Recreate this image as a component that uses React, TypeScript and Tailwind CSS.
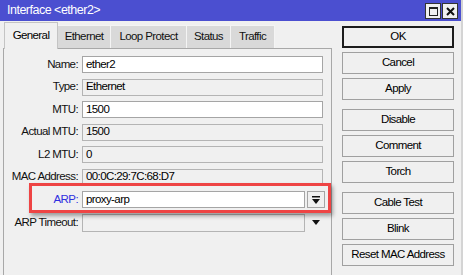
import React from 'react';

const font = { fontFamily: '"Liberation Sans", Arial, sans-serif' };

const tabs = ['General', 'Ethernet', 'Loop Protect', 'Status', 'Traffic'];
const tabWidths = ['w-[54px]', 'w-[53px]', 'w-[76px]', 'w-[44px]', 'w-[44px]'];

type Field = { label: string; value: string; editable?: boolean };

const fields: Field[] = [
  { label: 'Name:', value: 'ether2', editable: true },
  { label: 'Type:', value: 'Ethernet' },
  { label: 'MTU:', value: '1500', editable: true },
  { label: 'Actual MTU:', value: '1500' },
  { label: 'L2 MTU:', value: '0' },
  { label: 'MAC Address:', value: '00:0C:29:7C:68:D7' },
];

const buttonGroups = [
  ['OK', 'Cancel', 'Apply'],
  ['Disable', 'Comment', 'Torch'],
  ['Cable Test', 'Blink', 'Reset MAC Address'],
];

const Row = ({ label, value, editable }: Field) => (
  <div className="flex items-center h-[17px]">
    <div className="w-[74px] whitespace-nowrap text-right text-[11.5px] tracking-[-0.6px] text-[#111] leading-none">{label}</div>
    <div
      className={`ml-[4px] w-[241px] h-[17px] border flex items-center pl-[3px] text-[11.5px] tracking-[-0.6px] leading-none text-black ${
        editable ? 'bg-white border-[#a5a5a5]' : 'bg-[#f0f0f0] border-[#b4b4b4]'
      }`}
    >
      {value}
    </div>
  </div>
);

export default function App() {
  return (
    <div className="w-[463px] h-[275px] bg-[#f0f0f0] overflow-hidden flex flex-col border-r-2 border-r-[#d4d4d4]" style={font}>
      <div className="h-[21px] bg-[#4b4fd0] flex items-center justify-between pl-[7px] pr-[3px] shrink-0">
        <span className="text-white text-[12.5px] tracking-[-0.5px] leading-none">Interface &lt;ether2&gt;</span>
        <div className="flex gap-[1px] mt-[1px]">
          <div className="w-[16px] h-[16px] bg-[#f0f0f0] border border-[#333] flex items-center justify-center">
            <div className="w-[9px] h-[9px] border border-[#222] border-t-2" />
          </div>
          <div className="w-[16px] h-[16px] bg-[#f0f0f0] border border-[#333] flex items-center justify-center">
            <svg width="9" height="9" viewBox="0 0 9 9">
              <path d="M1 1L8 8M8 1L1 8" stroke="#111" strokeWidth="2" />
            </svg>
          </div>
        </div>
      </div>

      <div className="flex flex-1">
        <div className="ml-[3px] w-[329px] flex flex-col">
          <div className="flex items-end h-[27px] pl-[1px]">
            {tabs.map((t, i) =>
              i === 0 ? (
                <div
                  key={t}
                  className={`${tabWidths[i]} h-[27px] -mb-[1px] relative z-10 bg-[#f0f0f0] border border-b-0 border-[#c4c4c4] flex items-center justify-center text-[11.5px] tracking-[-0.6px] text-black`}
                >
                  {t}
                </div>
              ) : (
                <div
                  key={t}
                  className={`${tabWidths[i]} h-[23px] bg-[#d9d9d9] border border-b-0 border-l-0 border-[#f4f4f4] flex items-center justify-center text-[11.5px] tracking-[-0.6px] text-[#111]`}
                >
                  {t}
                </div>
              )
            )}
          </div>
          <div className="flex-1 border border-b-0 border-[#a8a8a8] pt-[7px] flex flex-col gap-[5.5px]">
            {fields.map((f) => (
              <Row key={f.label} {...f} />
            ))}
            <div className="flex items-center h-[17px] relative">
              <div className="w-[74px] text-right text-[11.5px] tracking-[-0.6px] text-[#2f2fe0] leading-none">ARP:</div>
              <div className="ml-[4px] w-[223px] h-[17px] bg-white border border-[#a5a5a5] flex items-center pl-[3px] text-[11.5px] tracking-[-0.6px] leading-none text-black">
                proxy-arp
              </div>
              <div className="ml-[2px] w-[18px] h-[17px] bg-[#f0f0f0] border border-[#a5a5a5] flex items-center justify-center">
                <svg width="8" height="8" viewBox="0 0 8 8">
                  <rect x="0" y="0" width="8" height="1.5" fill="#111" />
                  <path d="M0 3H8L4 8Z" fill="#111" />
                </svg>
              </div>
              <div className="absolute left-[25px] top-[-8px] w-[302px] h-[30px] border-[3px] border-[#ee4444] shadow-[2px_3px_4px_rgba(0,0,0,0.35)] pointer-events-none" />
            </div>
            <div className="flex items-center h-[18px]">
              <div className="w-[74px] whitespace-nowrap text-right text-[11.5px] tracking-[-0.6px] text-[#111] leading-none">ARP Timeout:</div>
              <div className="ml-[4px] w-[223px] h-[18px] bg-[#f0f0f0] border border-[#b4b4b4]" />
              <div className="ml-[2px] w-[18px] flex items-center justify-center">
                <svg width="8" height="5" viewBox="0 0 8 5">
                  <path d="M0 0H8L4 5Z" fill="#111" />
                </svg>
              </div>
            </div>
          </div>
        </div>

        <div className="ml-[10px] pt-[5px] w-[112px] flex flex-col gap-[9px]">
          {buttonGroups.map((g, gi) => (
            <div key={gi} className="flex flex-col gap-[4px]">
              {g.map((b) => (
                <div
                  key={b}
                  className={`h-[22px] flex items-center justify-center text-[11.5px] tracking-[-0.6px] text-black bg-[#f0f0f0] ${
                    b === 'OK' ? 'border-2 border-[#1c1c1c]' : 'border border-[#a0a0a0]'
                  }`}
                >
                  {b}
                </div>
              ))}
            </div>
          ))}
        </div>
      </div>
    </div>
  );
}
